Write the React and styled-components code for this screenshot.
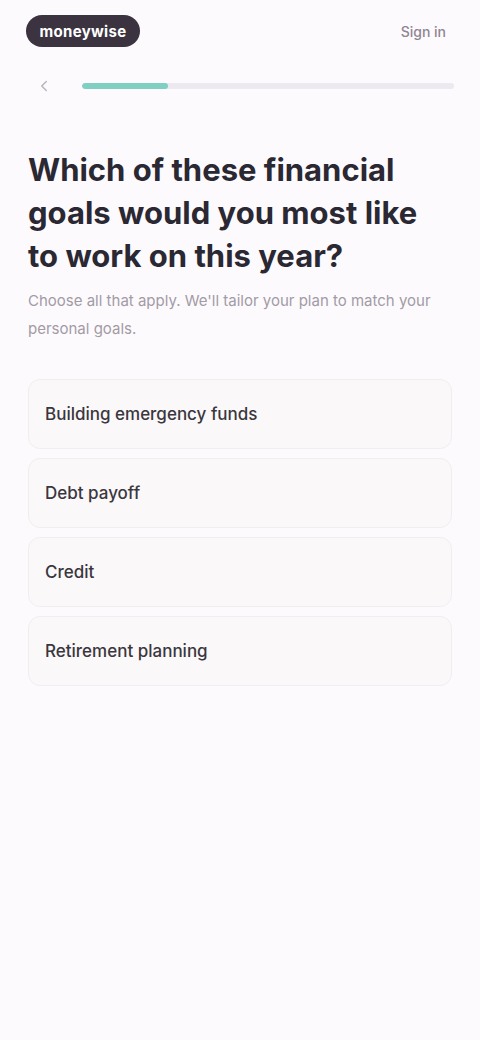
import React, { useState } from "react";
import styled, { createGlobalStyle } from "styled-components";

const Global = createGlobalStyle`
  html, body { margin: 0; padding: 0; background: #fdfafd; }
  body { font-family: Inter, "Noto Sans", sans-serif; color: #25232b; }
  * { box-sizing: border-box; }
`;

const Page = styled.div`
  width: 480px;
  min-height: 1040px;
  background: #fdfafd;
  display: flex;
  flex-direction: column;
`;

const TopBar = styled.header`
  display: flex;
  align-items: center;
  justify-content: space-between;
  padding: 14px 34px 0 26px;
  height: 48px;
`;

const Logo = styled.div`
  width: 114px;
  height: 32px;
  border-radius: 16px;
  background: #3b3340;
  color: #ffffff;
  font-weight: 700;
  font-size: 15px;
  display: flex;
  align-items: center;
  justify-content: center;
  letter-spacing: 0.3px;
`;

const SignIn = styled.a`
  font-size: 14px;
  color: #8f8593;
  font-weight: 500;
  text-decoration: none;
`;

const ProgressRow = styled.div`
  display: flex;
  align-items: center;
  gap: 26px;
  padding: 26px 26px 0 32px;
`;

const Back = styled.button`
  border: none;
  background: none;
  padding: 0;
  width: 24px;
  height: 24px;
  display: flex;
  align-items: center;
  justify-content: center;
  color: #b9b3bd;
`;

const Track = styled.div`
  flex: 1;
  height: 6px;
  border-radius: 3px;
  background: #eceaf0;
  overflow: hidden;
`;

const Fill = styled.div`
  height: 100%;
  border-radius: 3px;
  background: #7fcfc2;
`;

const Content = styled.main`
  padding: 50px 28px 0 28px;
  display: flex;
  flex-direction: column;
`;

const Title = styled.h1`
  margin: 0;
  max-width: 405px;
  font-size: 31px;
  line-height: 43px;
  font-weight: 700;
  color: #2a2832;
`;

const Subtitle = styled.p`
  margin: 10px 0 0;
  font-size: 15px;
  line-height: 28px;
  color: #a29ba6;
`;

const Options = styled.div`
  display: flex;
  flex-direction: column;
  gap: 9px;
  margin-top: 36px;
`;

const Option = styled.button`
  height: 70px;
  width: 100%;
  border-radius: 12px;
  border: 1px solid ${(p) => (p.$selected ? "#7fcfc2" : "#f1eef1")};
  background: ${(p) => (p.$selected ? "#f1faf8" : "#faf8f8")};
  padding: 0 16px;
  display: flex;
  align-items: center;
  font-family: inherit;
  font-size: 17px;
  font-weight: 500;
  color: #3a3640;
  text-align: left;
  cursor: pointer;
`;

const options = [
  "Building emergency funds",
  "Debt payoff",
  "Credit",
  "Retirement planning",
];

export default function App() {
  const [sel, setSel] = useState(null);
  return (
    <Page>
      <Global />
      <TopBar>
        <Logo>moneywise</Logo>
        <SignIn href="#">Sign in</SignIn>
      </TopBar>
      <ProgressRow>
        <Back aria-label="Back">
          <svg width="18" height="18" viewBox="0 0 24 24" fill="none" stroke="currentColor" strokeWidth="2" strokeLinecap="round" strokeLinejoin="round">
            <path d="M15 18l-6-6 6-6" />
          </svg>
        </Back>
        <Track>
          <Fill style={{ width: "23%" }} />
        </Track>
      </ProgressRow>
      <Content>
        <Title>Which of these financial goals would you most like to work on this year?</Title>
        <Subtitle>Choose all that apply. We'll tailor your plan to match your personal goals.</Subtitle>
        <Options>
          {options.map((o, i) => (
            <Option key={o} $selected={sel === i} onClick={() => setSel(i)}>
              {o}
            </Option>
          ))}
        </Options>
      </Content>
    </Page>
  );
}
